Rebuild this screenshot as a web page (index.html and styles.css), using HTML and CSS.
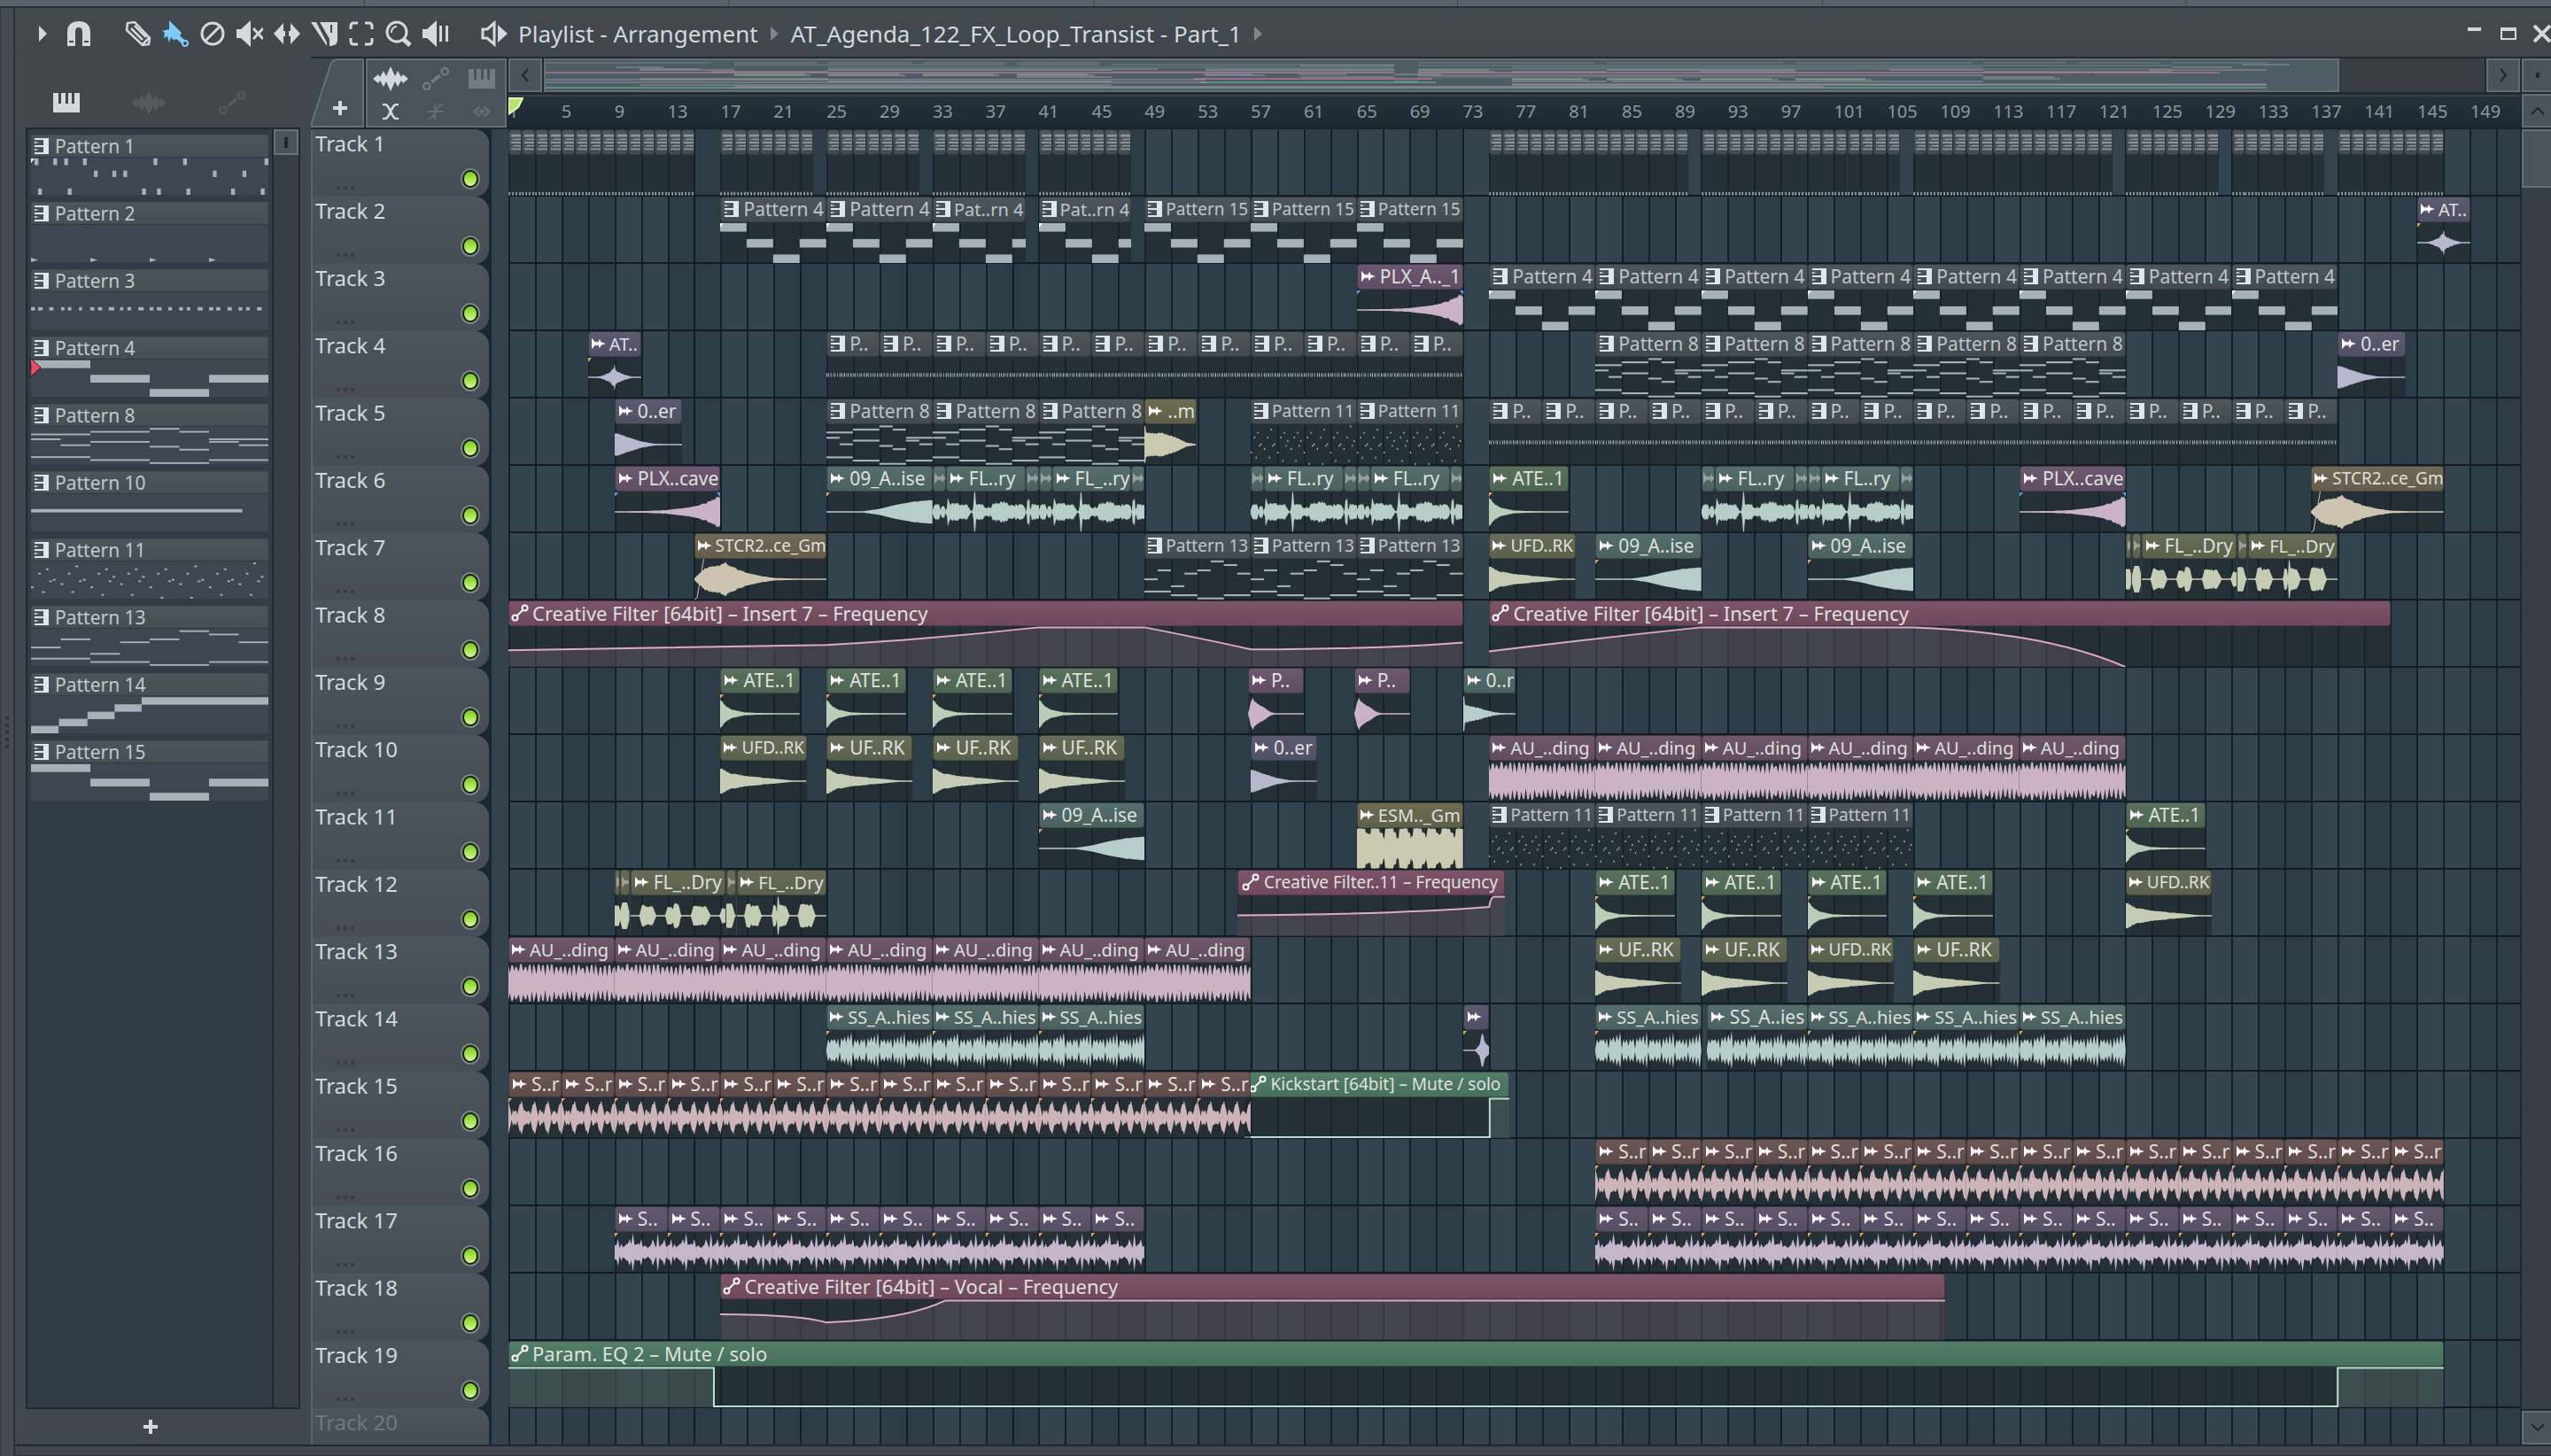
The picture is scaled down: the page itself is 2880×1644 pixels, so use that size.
FILE: index.html
```html
<!DOCTYPE html>
<html lang="en">
<head>
  <meta charset="utf-8">
  <title>Playlist - Arrangement</title>
  <link rel="stylesheet" href="styles.css">
</head>
<body>
  <!-- shared icons -->
  <svg class="defs" aria-hidden="true">
    <symbol id="i-pattern" viewBox="0 0 16 18">
      <path d="M10 0H16V18H10ZM0 0H10V2H0ZM0 4L5 5L0 6ZM0 8H10V10H0ZM0 12L5 13L0 14ZM0 16H10V18H0Z"/>
    </symbol>
    <symbol id="i-keys" viewBox="0 0 12 20">
      <path d="M0 0H12V3H0ZM4 5H12V7H0ZM0 9H12V11H0ZM4 13H12V15H0ZM0 17H12V19H0Z"/>
    </symbol>
    <symbol id="i-wave" viewBox="0 0 18 14">
      <path d="M0 0L5 5.500L6 4L8 6L10 1L12 5L18 7L12 9L10 13L8 8L6 10L5 8.500L0 14Z"/>
    </symbol>
    <symbol id="i-auto" viewBox="0 0 20 20">
      <g fill="none" stroke="currentColor" stroke-width="2"><circle cx="4.500" cy="15.500" r="3"/><circle cx="15.500" cy="4.500" r="3"/><path d="M7 13L13 7"/></g>
    </symbol>
    <symbol id="i-bigwave" viewBox="0 0 40 28">
      <path d="M0 14L6 9L8 12L12 5L15 11L20 0L25 11L28 5L32 12L34 9L40 14L34 19L32 16L28 23L25 17L20 28L15 17L12 23L8 16L6 19Z"/>
    </symbol>
    <symbol id="i-link" viewBox="0 0 32 28">
      <g fill="none" stroke="currentColor" stroke-width="2.500"><circle cx="5" cy="23" r="4"/><circle cx="27" cy="5" r="4"/><path stroke-width="4" d="M11 18L21 10"/></g>
    </symbol>
    <symbol id="i-piano" viewBox="0 0 30 22">
      <path d="M0 0H6V12H9V0H14V12H17V0H21V12H24V0H30V22H0Z"/>
    </symbol>
  </svg>

  <div class="strip"><i></i><i></i><i></i><i></i><i></i><i></i></div>
  <div class="window">
    <div class="grip"><span class="dots"><i></i><i></i><i></i><i></i><i></i></span></div>
    <div class="main">
      <header class="toolbar">
        <button class="t-arrow" aria-label="Menu"><svg viewBox="0 0 10 18"><path d="M0 0L9 9L0 18Z"/></svg></button>
        <button class="t-magnet" aria-label="Snap"><svg viewBox="0 0 28 28"><path d="M1 28V12C1 4 6 0 14 0S27 4 27 12V28H18V12C18 9 17 7 14 7S10 9 10 12V28Z"/><path d="M3 23H8M20 23H25" stroke="#40474d" stroke-width="2"/></svg></button>
        <button aria-label="Draw"><svg viewBox="0 0 30 30"><path d="M2 11L3 3L11 2L28 20L27 27L20 28L2 11Z" fill="none" stroke="currentColor" stroke-width="2.500"/><path d="M7 9L20 22M11 6L24 19M20 27L27 20" stroke="currentColor" stroke-width="2.500" fill="none"/></svg></button>
        <button class="on" aria-label="Paint"><svg viewBox="0 0 30 30"><path d="M8 0L17 9L22 14L18 21L13 22L10 19L8 25L6 18L2 20L3 14L0 12L8 10Z"/><path d="M18 19L26 26" stroke="currentColor" stroke-width="5"/><circle cx="26" cy="26" r="3" fill="#40474d" stroke="currentColor" stroke-width="2"/></svg></button>
        <button aria-label="Delete"><svg viewBox="0 0 30 30"><g fill="none" stroke="currentColor" stroke-width="3"><circle cx="15" cy="15" r="12"/><path d="M7 23L23 7"/></g></svg></button>
        <button aria-label="Mute"><svg viewBox="0 0 30 30"><path d="M0 10H5L16 0V30L5 20H0Z"/><path d="M19 9L30 21M30 9L19 21" stroke="currentColor" stroke-width="3"/></svg></button>
        <button aria-label="Slip"><svg viewBox="0 0 30 30"><path d="M0 15L11 3V12H13V18H11V27ZM30 15L19 3V12H17V18H19V27Z"/></svg></button>
        <button aria-label="Slice"><svg viewBox="0 0 30 30"><path d="M0 2H6L18 25V29ZM10 2H30V22C30 27 26 29 21 29V21Z"/><path d="M23 5V14" stroke="#40474d" stroke-width="2"/></svg></button>
        <button aria-label="Select"><svg viewBox="0 0 30 30"><path d="M11 3H6Q3 3 3 7V10M19 3H24Q27 3 27 7V10M11 27H6Q3 27 3 23V20M19 27H24Q27 27 27 23V20" fill="none" stroke="currentColor" stroke-width="3"/></svg></button>
        <button aria-label="Zoom"><svg viewBox="0 0 30 30"><circle cx="13" cy="13" r="11" fill="none" stroke="currentColor" stroke-width="3"/><path d="M7 14A6 6 0 0 1 13 7" fill="none" stroke="currentColor" stroke-width="2"/><path d="M20 21L28 28" stroke="currentColor" stroke-width="5"/></svg></button>
        <button aria-label="Playback"><svg viewBox="0 0 30 30"><path d="M0 10H5L16 0V30L5 20H0ZM19 6H22V24H19ZM26 6H29V24H26Z"/></svg></button>
        <button class="t-speaker" aria-label="Preview"><svg viewBox="0 0 30 30"><path d="M2 10H7L15 3V27L7 20H2Z" fill="none" stroke="currentColor" stroke-width="3"/><path d="M19 5L30 15L19 25Z"/></svg></button>
        <h1>Playlist - Arrangement</h1>
        <svg class="crumb" viewBox="0 0 9 16"><path d="M0 0L9 8L0 16Z"/></svg>
        <h1>AT_Agenda_122_FX_Loop_Transist - Part_1</h1>
        <svg class="crumb" viewBox="0 0 9 16"><path d="M0 0L9 8L0 16Z"/></svg>
        <span class="winbtns">
          <button aria-label="Minimize"><svg viewBox="0 0 20 20"><path d="M2 3H17V7H2Z"/></svg></button>
          <button aria-label="Maximize"><svg viewBox="0 0 20 20"><path d="M1 3H19V17H1ZM3 7V15H17V7Z" fill-rule="evenodd"/></svg></button>
          <button aria-label="Close"><svg viewBox="0 0 20 20"><path d="M1 1L19 19M19 1L1 19" stroke="currentColor" stroke-width="4"/></svg></button>
        </span>
      </header>

      <div class="content">
        <aside class="picker">
          <div class="picker-tabs">
            <button aria-label="Patterns"><svg class="piano"><use href="#i-piano"/></svg></button>
            <button class="off" aria-label="Audio clips"><svg class="bigwave"><use href="#i-bigwave"/></svg></button>
            <button class="off" aria-label="Automation"><svg class="link"><use href="#i-link"/></svg></button>
          </div>
          <div class="picker-body">
            <div class="patterns" id="patterns"></div>
            <div class="scroll">
              <button class="thumb" aria-label="Scroll patterns"></button>
            </div>
          </div>
          <button class="add" aria-label="Add pattern"><svg viewBox="0 0 16 16"><path d="M6 0H10V6H16V10H10V16H6V10H0V6H6Z"/></svg></button>
        </aside>

        <section class="playlist">
          <div class="corner">
            <div class="tab">
              <svg class="tab-shape" viewBox="0 0 60 80" preserveAspectRatio="none"><path d="M1 80V74L22 8Q24 1 30 1H59V79H1Z"/></svg>
              <button aria-label="Add track"><svg viewBox="0 0 16 16"><path d="M6 0H10V6H16V10H10V16H6V10H0V6H6Z"/></svg></button>
            </div>
            <div class="modes">
              <button aria-label="Audio"><svg class="bigwave"><use href="#i-bigwave"/></svg></button>
              <button class="dim" aria-label="Automation"><svg class="link"><use href="#i-link"/></svg></button>
              <button class="dim" aria-label="Patterns"><svg class="piano"><use href="#i-piano"/></svg></button>
              <button aria-label="Crossfade"><svg class="small" viewBox="0 0 20 20"><path d="M0 1H3C9 1 11 19 17 19H20M20 1H17C11 1 9 19 3 19H0" fill="none" stroke="currentColor" stroke-width="3"/></svg></button>
              <button class="faint" aria-label="Curve"><svg class="small" viewBox="0 0 20 20"><path d="M0 10H20M9 0V20M0 19C12 19 8 1 20 1" fill="none" stroke="currentColor" stroke-width="2"/></svg></button>
              <button class="faint" aria-label="Stretch"><svg class="small" viewBox="0 0 20 20"><path d="M7 4L1 10L7 16M13 4L19 10L13 16M6 10H14M10 6V14" fill="none" stroke="currentColor" stroke-width="3"/></svg></button>
            </div>
          </div>
          <div class="overview">
            <button class="nav" aria-label="Scroll left"><svg viewBox="0 0 10 16"><path d="M8 1L2 8L8 15"/></svg></button>
            <div class="overview-rail"><div class="mini" id="mini"></div></div>
            <button class="nav" aria-label="Scroll right"><svg viewBox="0 0 10 16"><path d="M2 1L8 8L2 15"/></svg></button>
          </div>
          <div class="ruler" id="ruler">
            <svg class="marker" viewBox="0 0 17 20"><path d="M0 1H16L11 11L0 19Z"/></svg>
          </div>
          <div class="heads" id="heads"></div>
          <div class="lanes">
            <div class="grid" id="grid"></div>
            <div class="rows" id="rows"></div>
          </div>
          <div class="vscroll">
            <button class="box" aria-label="Zoom"><i></i></button>
            <button class="box" aria-label="Scroll up"><svg viewBox="0 0 16 10"><path d="M1 9L8 2L15 9"/></svg></button>
            <div class="rail"><button class="vthumb" aria-label="Scroll tracks"></button></div>
            <button class="box" aria-label="Scroll down"><svg viewBox="0 0 16 10"><path d="M1 1L8 8L15 1"/></svg></button>
          </div>
        </section>
      </div>
      <footer class="bottom"></footer>
    </div>
  </div>
  <script src="script.js"></script>
</body>
</html>
```
FILE: styles.css
```css
* {
  box-sizing: border-box;
}

body {
  display: flex;
  flex-direction: column;
  height: 100vh;
  margin: 0;
  overflow: hidden;
  background-color: #40474d;
  color: #d3d9dc;
  font-family: "Noto Sans", "Open Sans", sans-serif;
  font-size: 21px;
}

button {
  display: flex;
  align-items: center;
  justify-content: center;
  padding: 0;
  border: 0;
  background: none;
  color: inherit;
  font: inherit;
}

svg {
  display: block;
  fill: currentColor;
}

.defs {
  display: none;
}

.strip {
  display: flex;
  flex: none;
  height: 9px;
  background-color: #59616a;
  border-bottom: 2px solid #2a3036;
  justify-content: space-evenly;
}

.strip i {
  width: 1px;
  background-color: #40474d;
}

.window {
  display: flex;
  flex: 1;
  min-height: 0;
}

.grip {
  display: flex;
  align-items: center;
  justify-content: center;
  width: 17px;
  background-color: #444b52;
  border-left: 1px solid #30363b;
  border-right: 2px solid #2b3238;
}

.dots {
  display: flex;
  flex-direction: column;
  gap: 4px;
}

.dots i {
  width: 4px;
  height: 4px;
  background-color: #2e343a;
}

.main {
  display: flex;
  flex-direction: column;
  flex: 1;
  min-width: 0;
}

/* title bar */
.toolbar {
  display: flex;
  align-items: center;
  flex: none;
  height: 55px;
  padding: 4px 0 2px 27px;
  background: linear-gradient(#434a50, #3f464c);
}

.toolbar button svg {
  width: 30px;
  height: 30px;
}

.toolbar button {
  width: 42px;
  flex: none;
}

.toolbar .t-arrow,
.toolbar .t-arrow svg {
  width: 10px;
  height: 18px;
}

.toolbar .t-magnet {
  width: 70px;
  margin-right: 11px;
}

.toolbar .t-magnet svg {
  width: 28px;
  height: 28px;
}

.toolbar .t-speaker {
  margin-left: 24px;
}

.toolbar .on {
  color: #7dcbfb;
}

.toolbar h1 {
  margin: 0 14px 0 6px;
  font-size: 26px;
  font-weight: 400;
  line-height: 32px;
  white-space: nowrap;
}

.toolbar .crumb {
  flex: none;
  width: 9px;
  height: 16px;
  margin: 0 8px 0 0;
  fill: #7f8689;
}

.winbtns {
  display: flex;
  gap: 18px;
  margin-left: auto;
}

.toolbar .winbtns button,
.toolbar .winbtns svg {
  width: 20px;
  height: 20px;
}

.content {
  display: flex;
  flex: 1;
  min-height: 0;
}

.piano {
  width: 30px;
  height: 22px;
}

.bigwave {
  width: 40px;
  height: 28px;
}

.link {
  width: 32px;
  height: 26px;
}

.small {
  width: 20px;
  height: 18px;
}

/* pattern picker on the left */
.picker {
  display: flex;
  flex-direction: column;
  flex: none;
  width: 334px;
  padding: 0 12px;
}

.picker-tabs {
  display: flex;
  align-items: center;
  gap: 58px;
  height: 80px;
  padding: 24px 0 0 31px;
}

.picker-tabs .off {
  color: #535b61;
}

.picker-body {
  display: flex;
  flex: 1;
  min-height: 0;
  border: 2px solid #20292f;
}

.patterns {
  flex: 1;
  display: flex;
  flex-direction: column;
  gap: 8px;
  padding: 6px 4px;
  background-color: #323c44;
}

.pattern {
  display: block;
  position: relative;
  width: 100%;
  height: 68px;
  text-align: left;
}

.pattern-head {
  display: flex;
  align-items: center;
  gap: 7px;
  height: 25px;
  padding: 0 3px;
  color: #bfc9ce;
  line-height: 22px;
  background: linear-gradient(#4c555a, #474f55);
  border: 1px solid #434b51;
}

.pattern-head svg {
  width: 16px;
  height: 18px;
  color: #dce8ee;
}

.pattern-view {
  display: block;
  width: 100%;
  height: 43px;
  background-color: #3e474f;
  border-top: 1px solid #343c43;
}

.notes {
  width: 100%;
  height: 100%;
  fill: #a8b1b8;
}

/* red triangle in front of the selected pattern */
.selected {
  position: absolute;
  left: -3px;
  top: 23px;
  width: 16px;
  height: 24px;
  fill: #ee4a66;
  stroke: #1a2026;
  stroke-width: 1px;
}

.corner-mark {
  position: absolute;
  left: 0;
  top: 27px;
  border-top: 5px solid #ffffff;
  border-right: 4px solid transparent;
}

.scroll {
  width: 30px;
  border-left: 2px solid #20292f;
  background: repeating-linear-gradient(45deg, #383f46, #383f46 2px, #343b41 2px, #343b41 4px);
}

.thumb {
  width: 100%;
  height: 29px;
  background-color: #4c545b;
  border: 2px solid #697178;
}

.thumb::after {
  content: "";
  width: 4px;
  height: 12px;
  background-color: #1f262c;
}

.add {
  height: 40px;
  padding-right: 28px;
}

.add svg,
.tab button svg {
  width: 16px;
  height: 16px;
}

/* playlist */
.playlist {
  flex: 1;
  min-width: 0;
  display: grid;
  grid-template-columns: 223px 1fr 35px;
  grid-template-rows: 43px 39px 1fr;
  background-color: #1d282f;
}

.corner {
  grid-row: 1 / 3;
  display: flex;
  gap: 2px;
  padding: 2px 2px 2px 0;
  background-color: #1f282e;
}

.tab {
  position: relative;
  display: flex;
  justify-content: center;
  width: 60px;
  padding: 44px 0 0 6px;
  background-color: #40474d;
}

.tab button {
  position: relative;
  height: 24px;
}

.tab-shape {
  position: absolute;
  left: 0;
  top: 0;
  width: 100%;
  height: 100%;
  fill: #4b535a;
  stroke: #687077;
  stroke-width: 2px;
}

.modes {
  flex: 1;
  display: grid;
  grid-template-columns: repeat(3, 1fr);
  align-items: center;
  background-color: #4b535a;
  border: 2px solid #656d74;
}

.dim {
  color: #747c82;
}

.faint {
  color: #656d73;
}

.overview {
  display: flex;
  align-items: stretch;
  gap: 2px;
  padding: 2px 0 3px 0;
  background-color: #23292f;
}

.nav {
  width: 38px;
  flex: none;
  background-color: #4b535a;
  border: 2px solid #656d74;
}

.nav svg {
  width: 10px;
  height: 16px;
  fill: none;
  stroke: #1f272d;
  stroke-width: 2px;
}

.overview-rail {
  flex: 1;
  background-color: #363d43;
}

.mini {
  position: relative;
  width: 92.5%;
  height: 100%;
  background-color: #4e5d64;
  border: 2px solid #646f75;
}

.mini i {
  position: absolute;
  height: 2px;
  opacity: 0.7;
}

.ruler {
  position: relative;
  overflow: hidden;
  background: linear-gradient(#25323a, #1d2930);
  border-bottom: 2px solid #1a242a;
  border-top: 2px solid #33434b;
}

.ruler span {
  position: absolute;
  top: 5px;
  color: #8c989f;
  font-size: 20px;
  line-height: 24px;
}

.ruler .marker {
  position: absolute;
  left: 0;
  top: 1px;
  width: 17px;
  height: 20px;
  fill: #b5e07a;
  stroke: #e9ffb4;
  stroke-width: 2px;
}

.heads {
  overflow: hidden;
  min-height: 0;
  border-left: 2px solid #5a636a;
  background: linear-gradient(90deg, #1b272e 202px, #33424b 202px);
}

.head {
  position: relative;
  width: 199px;
  height: 76px;
  padding: 0 3px;
  background: linear-gradient(#4c555b, #464d54);
  border-radius: 0 16px 16px 0;
  font-size: 24px;
  line-height: 31px;
}

.head.idle {
  height: 41px;
  color: #70787e;
  border-bottom-right-radius: 0;
}

.head .more {
  position: absolute;
  left: 27px;
  bottom: 8px;
  display: flex;
  gap: 4px;
}

.head .more i {
  width: 4px;
  height: 4px;
  background-color: #363e44;
}

.head input {
  appearance: none;
  position: absolute;
  right: 12px;
  top: 46px;
  width: 18px;
  height: 20px;
  margin: 0;
  border: 2px solid #16240f;
  border-radius: 50%;
  background: linear-gradient(#7fc52a, #a4e648 50%, #d6f5a2);
  box-shadow: 0 0 0 2px #7d8781;
}

.lanes {
  position: relative;
  overflow: hidden;
  min-height: 0;
  background-color: #2d3d48;
}

.grid {
  position: absolute;
  inset: 0;
  display: flex;
}

.grid i {
  flex: none;
  border-left: 2px solid #11212b;
}

.grid i:nth-child(4n+1),
.grid i:nth-child(4n+2) {
  background-color: #33444f;
}

.rows {
  position: relative;
}

.row {
  position: relative;
  height: 76px;
  border-bottom: 2px solid #0f1c24;
}

.clip {
  position: absolute;
  top: 0;
  bottom: -1px;
  overflow: hidden;
  background-color: rgba(30, 36, 40, 0.6);
}

.clip-head {
  display: flex;
  align-items: center;
  gap: 5px;
  height: 29px;
  padding: 0 0 1px 4px;
  overflow: hidden;
  line-height: 25px;
  white-space: nowrap;
  border: 1px solid rgba(30, 36, 40, 0.5);
  border-radius: 4px;
  background: linear-gradient(rgba(255, 255, 255, 0.04), rgba(0, 0, 0, 0.06)) var(--head);
  color: #dfe0df;
}

.clip-head svg {
  flex: none;
  width: 16px;
  height: 14px;
  color: #fdf6fa;
}

.clip-pattern .clip-head {
  color: #bdc6cb;
}

.clip-pattern .clip-head svg {
  height: 18px;
  color: #dce8ee;
}

.clip-auto .clip-head {
  gap: 3px;
  padding-left: 1px;
  font-size: 22px;
}

.clip-auto .clip-head svg {
  width: 22px;
  height: 20px;
}

/* smaller type for labels that do not fit their clip */
.clip-head.tight {
  gap: 4px;
  padding-left: 3px;
  font-size: 20px;
}

.clip-head.tighter {
  font-size: 19px;
}

.clip-head.tightest {
  font-size: 18px;
}

.clip-short .clip-head {
  padding-left: 1px;
}

.clip-short .clip-head svg {
  opacity: 0.4;
}

.clip-step .clip-head {
  padding: 0 1px 0 2px;
}

.clip-step .clip-head svg {
  width: 11px;
  height: 20px;
  color: #8b959a;
}

.clip-view {
  display: block;
  width: 100%;
  height: 46px;
}

.clip-pattern .clip-view {
  fill: #a8b1b8;
}

.clip-audio .clip-view {
  fill: var(--wave);
  stroke: var(--wave);
  stroke-width: 1px;
}

.clip-auto .clip-view {
  fill: none;
  stroke: var(--wave);
  stroke-width: 2px;
}

.clip-auto .area {
  fill: var(--wave);
  fill-opacity: 0.16;
  stroke: none;
}

/* loop and fade marks in the corners of a clip */
.mark {
  position: absolute;
  left: 0;
  top: 30px;
  border-top: 5px solid #e5a35c;
  border-right: 4px solid transparent;
}

.mark-white {
  border-top-color: #ffffff;
}

.mark-blue {
  border-top-color: #5f9ddb;
}

.mark-end {
  left: auto;
  right: 0;
  border-right: 0;
  border-left: 4px solid transparent;
}

/* right scroll bar */
.vscroll {
  grid-column: 3;
  grid-row: 1 / 4;
  display: flex;
  flex-direction: column;
  gap: 2px;
  padding: 2px 0 0 2px;
}

.box {
  height: 38px;
  flex: none;
  background-color: #4b535a;
  border: 2px solid #656d74;
  border-right: 0;
}

.box i {
  width: 4px;
  height: 6px;
  background-color: #1f272d;
}

.box svg {
  width: 16px;
  height: 10px;
  fill: none;
  stroke: #1f272d;
  stroke-width: 2px;
}

.rail {
  flex: 1;
  background: repeating-linear-gradient(45deg, #383f46, #383f46 2px, #343b41 2px, #343b41 4px);
}

.vthumb {
  width: 100%;
  height: 66px;
  background-color: #4b535a;
  border: 2px solid #656d74;
  border-right: 0;
}

.bottom {
  flex: none;
  height: 13px;
  border-top: 2px solid #20292f;
  border-bottom: 1px solid #2a3036;
}
```
FILE: script.js
```js
const BARS = 151.75; // bars that fit in the view
const TRACKS = 20;

// header colour, waveform colour
const colors = {
  pattern: ['#474f55', '#a8b1b8'],
  lavender: ['#55546b', '#b7b8ce'],
  pink: ['#66526a', '#cab2c9'],
  mauve: ['#685163', '#cbb3c4'],
  teal: ['#4f6865', '#b6cdc9'],
  green: ['#526b56', '#b8ceb6'],
  olive: ['#61674f', '#c5ccb3'],
  moss: ['#65664b', '#c9cab0'],
  tan: ['#6b634f', '#ccc4b0'],
  plum: ['#66504f', '#ccb4b8'],
  purple: ['#5c526a', '#c5b5cd'],
  rose: ['#774d62', '#dfa9c4'],
  mint: ['#4c7863', '#b3e6cc']
};

function noise(n) {
  const x = Math.sin(n * 127.1 + 11.7) * 43758.5453;
  return x - Math.floor(x);
}

// straight lines between [x, value] points
function lerp(points, t) {
  for (let i = 1; i < points.length; i++) {
    const [x0, y0] = points[i - 1];
    const [x1, y1] = points[i];
    if (t <= x1) return y0 + (y1 - y0) * (t - x0) / (x1 - x0 || 1);
  }
  return points[points.length - 1][1];
}

function env(points, rough) {
  return (t, i) => Math.max(0.02, lerp(points, t) * (1 - rough * noise(i)));
}

// bumps given as [centre, half width, height]
function lobes(list, t, base = 0.02) {
  let a = base;
  for (const [c, w, h] of list) a = Math.max(a, h * Math.min(1, 1.8 * (1 - Math.abs(t - c) / w)));
  return a;
}

const waves = {
  burst: env([[0, .02], [.15, .02], [.3, .12], [.42, .3], [.5, .68], [.51, .42], [.6, .25], [.7, .12], [.85, .02], [1, .02]], .3),
  tail: env([[0, .6], [.1, .52], [.25, .32], [.4, .16], [.6, .04], [.8, .02], [1, .02]], .12),
  swell: env([[0, .02], [.3, .05], [.5, .1], [.7, .24], [.85, .44], [.96, .74], [.98, .85], [1, .7]], .15),
  rise: env([[0, .02], [.33, .02], [.5, .15], [.65, .35], [.8, .5], [1, .6]], .05),
  impact: env([[0, .05], [.03, .25], [.08, .6], [.2, .75], [.23, .9], [.26, .7], [.3, .6], [.4, .32], [.5, .17], [.6, .07], [.75, .03], [1, .02]], .15),
  hit: env([[0, .78], [.06, .45], [.15, .22], [.3, .08], [.5, .04], [.8, .02], [1, .02]], .12),
  clap: env([[0, .7], [.12, .42], [.3, .27], [.5, .18], [.7, .1], [.85, .03], [1, .02]], .15),
  crash: env([[0, 1], [.02, 1], [.03, .62], [.35, .6], [.6, .38], [.8, .12], [1, .02]], .12),
  perc: env([[0, .02], [.07, .85], [.15, .6], [.25, .4], [.4, .1], [.5, .02], [1, .02]], .15),
  snap: env([[0, 1], [.02, 1], [.03, .48], [.2, .4], [.4, .22], [.6, .08], [.8, .02], [1, .02]], .2),
  reverse: env([[0, .02], [.45, .03], [.62, .3], [.72, 1], [.82, .4], [.9, .3], [1, .2]], .15),
  noise: (t, i) => i % 3 === 1 ? .3 + .3 * noise(i) : .7 + .24 * noise(i >> 1),
  full: (t, i) => {
    const p = (t * 7.5) % 1;
    return p > .8 ? .45 + noise(i) * .3 : 1 - noise(i) * .05 - (p > .6 ? .2 : 0);
  },
  hats: (t, i) => {
    const p = (t * 4) % 1;
    if (i % 8 === 0) return .08;
    return i % 2 ? .55 + .4 * Math.pow(p, 3) : .2 + .25 * noise(i);
  },
  kick: (t, i) => {
    const p = (t * 4 + .05) % 1;
    const d = Math.min(p, 1 - p);
    const side = Math.abs(p - .5) < .2 ? .4 : .08;
    return Math.max(side * (.6 + .4 * noise(i)), (.98 - d * 2.9) * (i % 4 === 3 ? .75 : 1));
  },
  shaker: (t, i) => {
    if (i % 15 === 11) return .95;
    if (i % 7 === 2) return .65;
    return .18 + .25 * noise(i);
  },
  // one bar of the loop, then six, then one again
  loopA: (t, i) => lobes([[.3, .35, .42], [.78, .22, .3]], t) * (.75 + .25 * noise(i)),
  loopB: (t, i) => lobes([[.03, .02, .8], [.1, .12, .45], [.22, .1, .42], [.36, .02, 1.1], [.42, .1, .45],
    [.52, .06, .25], [.62, .07, .5], [.72, .1, .6], [.82, .06, .4], [.92, .1, .42]], t) * (.7 + .3 * noise(i)),
  loopC: (t, i) => lobes([[.2, .15, .7], [.6, .3, .4], [.9, .25, .35]], t) * (.75 + .25 * noise(i)),
  dryA: (t, i) => lobes([[.3, 1, .5]], t),
  dryB: (t, i) => lobes([[.5, .6, .65]], t),
  dryC: (t, i) => lobes([[.14, .05, .55], [.2, .07, .5], [.41, .05, .5], [.48, .05, .65], [.68, .05, .55],
    [.75, .09, .5], [.98, .05, .4]], t) * (.8 + .2 * noise(i)),
  dryD: (t, i) => lobes([[.3, .6, .6]], t),
  dryE: (t, i) => lobes([[.13, .05, .6], [.2, .08, .55], [.42, .03, .6], [.46, .015, 1.1], [.51, .08, .55],
    [.73, .05, .65], [.8, .08, .6]], t) * (.8 + .2 * noise(i))
};

// notes of each pattern as [x, y, width, height] in percent
function dashes(y, h, list) {
  return list.map(([x, w]) => [x, y, w, h]);
}

const chord4 = [[0, 2, 25, 21], [25, 41, 25, 21], [50, 79, 25, 21], [75, 41, 25, 21]];
const patternNotes = {
  1: [...dashes(2, 18, [[1.5, 1.6], [9.4, 1.6], [14, 1.6], [21.9, 1.6], [51.6, 1.6], [64.1, 1.6], [98.4, 1.6]]),
    ...dashes(35, 17, [[26.5, 1.6], [34.3, 1.6], [38.9, 1.6], [76.6, 1.6], [89.1, 1.6]]),
    ...dashes(83, 17, [[3, 1.6], [15.5, 1.6], [46.8, 1.6], [53.1, 1.6], [65.5, 1.6], [84.3, 1.6], [96.8, 1.6]])],
  3: dashes(40, 9, [[0, 1.7], [3, 1.9], [7.7, 1.8], [12.7, 1.4], [15.5, 1.5], [20.2, 1.3], [24.9, 1.8], [28.2, 1.8],
    [32.7, 2.4], [37.5, 1.4], [40.6, 1.6], [45.2, 2.3], [50, 1.6], [53, 2], [57.8, 1.6], [62.4, 1.6], [65.6, 1.5],
    [70.2, 2.1], [75, 1.8], [78, 1.8], [82.8, 1.8], [87.4, 1.6], [90.6, 1.6], [95.2, 2]]),
  4: chord4,
  8: [[0, 18, 25], [25, 11, 25], [50, 3, 12.5], [62.5, 11, 12.5], [75, 31, 25], [0, 31, 12.5], [12.5, 47, 12.5],
    [25, 38, 25], [50, 51, 12.5], [62.5, 59, 12.5], [75, 38, 12.5], [87.5, 47, 12.5], [0, 79, 25], [25, 87, 25],
    [50, 95, 25], [75, 87, 25]].map(n => [...n, 4.5]),
  10: [[0, 40, 89, 9]],
  11: [[99, 434], [121, 387], [133, 450], [145, 372], [155, 413], [166, 408], [190, 423], [212, 387], [223, 450],
    [235, 362], [246, 413], [258, 408], [281, 434], [303, 387], [315, 460], [326, 372], [337, 413], [349, 398],
    [372, 423], [394, 387], [405, 460], [417, 372], [428, 413], [439, 398], [462, 434], [485, 387], [496, 470],
    [508, 372], [519, 413], [530, 408], [553, 423], [575, 387], [587, 470], [599, 362], [610, 413], [621, 408],
    [644, 434], [666, 387], [678, 460], [690, 372], [701, 413], [712, 408], [735, 423], [757, 387], [769, 460],
    [780, 352], [792, 413], [803, 398]].map(([x, y]) => [(x - 99) / 7.27, (y - 348) / 1.28, 1.1, 4.5]),
  13: [[0, 48, 12.5], [12.5, 26, 12.5], [25, 65, 12.5], [37.5, 34, 12.5], [50, 26, 12.5], [62.5, 4, 12.5],
    [75, 13, 12.5], [87.5, 34, 12.5], [0, 78, 25], [25, 87, 25], [50, 95, 25], [75, 87, 25]].map(n => [...n, 4.5]),
  14: [[0, 80, 11.6, 20], [11.8, 61, 12, 20], [23.8, 42, 11.4, 20], [35.2, 22, 11.4, 20], [46.6, 3, 53.4, 20]],
  15: chord4
};

function notesSvg(id, cls) {
  let shapes = '';
  if (id === 2) {
    shapes = [0, 25, 50, 75].map(x => `<path d="M${x} 88L${x + 3} 94L${x} 100Z"/>`).join('');
  } else if (id === 'step') {
    shapes = [3, 30, 55, 82].map(x => `<rect x="${x}" y="91" width="10" height="8"/>`).join('');
  } else {
    shapes = patternNotes[id].map(n => `<rect x="${n[0]}" y="${n[1]}" width="${n[2]}" height="${n[3]}"/>`).join('');
  }
  return `<svg class="${cls}" viewBox="0 0 100 100" preserveAspectRatio="none">${shapes}</svg>`;
}

// points per bar for the dense waveforms
const detail = { noise: 9, hats: 8, kick: 12, shaker: 8 };

function waveSvg(name, bars) {
  const n = Math.max(12, Math.round(bars * (detail[name] || 15)));
  const up = [];
  const down = [];
  for (let i = 0; i <= n; i++) {
    const a = Math.min(1, waves[name](i / n, i)) * 23;
    up.push(`${i} ${(23 - a).toFixed(1)}`);
    down.unshift(`${i} ${(23 + a).toFixed(1)}`);
  }
  const fade = name === 'impact' ?
    `<path d="M0 46L${n * .02} 44L${n * .07} 0" fill="none" vector-effect="non-scaling-stroke"/>` : '';
  return `<svg class="clip-view" viewBox="0 0 ${n} 46" preserveAspectRatio="none">` +
    `<path d="M${up.join('L')}L${down.join('L')}Z" stroke-width="0"/><path d="M0 23H${n}" vector-effect="non-scaling-stroke"/>${fade}</svg>`;
}

function autoSvg(bars, line) {
  return `<svg class="clip-view" viewBox="0 0 ${bars} 100" preserveAspectRatio="none">` +
    `<path class="area" d="${line}V100H0Z"/><path d="${line}" vector-effect="non-scaling-stroke"/></svg>`;
}

const clips = [];

function pat(track, start, len, id, label) {
  clips.push({ track, start, len, kind: 'pattern', id, label, color: 'pattern' });
}

function audio(track, start, len, label, color, wave, mark) {
  clips.push({ track, start, len, kind: 'audio', label, color, wave, mark });
}

function auto(track, start, len, label, color, line) {
  clips.push({ track, start, len, kind: 'auto', label, color, line });
}

function range(from, to, step, fn) {
  for (let b = from; b < to; b += step) fn(b);
}

function loopRow(track, start, labels) {
  labels.forEach((label, k) => {
    const b = start + k * 8;
    audio(track, b, 1, '', 'teal', 'loopA');
    audio(track, b + 1, 6, label, 'teal', 'loopB');
    audio(track, b + 7, 1, '', 'teal', 'loopC');
  });
}

function dryRow(track, b) {
  audio(track, b, .4, '', 'olive', 'dryA');
  audio(track, b + .45, .7, '', 'olive', 'dryB');
  audio(track, b + 1.2, 7.2, 'FL_..Dry', 'olive', 'dryC');
  audio(track, b + 8.45, .75, '', 'olive', 'dryD');
  audio(track, b + 9.25, 6.75, 'FL_..Dry', 'olive', 'dryE');
}

[[1, 15], [17, 24], [25, 32], [33, 40], [41, 48], [75, 90], [91, 106], [107, 122], [123, 130], [131, 138], [139, 147]]
  .forEach(([a, z]) => range(a, z, 1, b => pat(1, b, 1, 'step', '')));

pat(2, 17, 8, 4, 'Pattern 4');
pat(2, 25, 8, 4, 'Pattern 4');
pat(2, 33, 7, 4, 'Pat..rn 4');
pat(2, 41, 7, 4, 'Pat..rn 4');
range(49, 73, 8, b => pat(2, b, 8, 15, 'Pattern 15'));
audio(2, 145, 4, 'AT..', 'lavender', 'burst', 'orange');

audio(3, 65, 8, 'PLX_A.._1', 'pink', 'swell', 'blue');
range(75, 139, 8, b => pat(3, b, 8, 4, 'Pattern 4'));

audio(4, 7, 4, 'AT..', 'lavender', 'burst', 'orange');
range(25, 73, 4, b => pat(4, b, 4, 3, 'P..'));
range(83, 123, 8, b => pat(4, b, 8, 8, 'Pattern 8'));
audio(4, 139, 5.1, '0..er', 'lavender', 'tail');

audio(5, 9, 5.1, '0..er', 'lavender', 'tail');
range(25, 49, 8, b => pat(5, b, 8, 8, 'Pattern 8'));
audio(5, 49, 3.9, '..m', 'moss', 'crash');
range(57, 73, 8, b => pat(5, b, 8, 11, 'Pattern 11'));
range(75, 139, 4, b => pat(5, b, 4, 3, 'P..'));

audio(6, 9, 8, 'PLX..cave', 'pink', 'swell', 'blue');
audio(6, 25, 8, '09_A..ise', 'teal', 'rise', 'orange');
loopRow(6, 33, ['FL..ry', 'FL_..ry']);
loopRow(6, 57, ['FL..ry', 'FL..ry']);
audio(6, 75, 6, 'ATE..1', 'green', 'hit', 'orange');
loopRow(6, 91, ['FL..ry', 'FL..ry']);
audio(6, 115, 8, 'PLX..cave', 'pink', 'swell', 'blue');
audio(6, 137, 10, 'STCR2..ce_Gm', 'tan', 'impact');

audio(7, 15, 10, 'STCR2..ce_Gm', 'tan', 'impact');
range(49, 73, 8, b => pat(7, b, 8, 13, 'Pattern 13'));
audio(7, 75, 6.5, 'UFD..RK', 'olive', 'clap');
audio(7, 83, 8, '09_A..ise', 'teal', 'rise', 'orange');
audio(7, 99, 8, '09_A..ise', 'teal', 'rise', 'orange');
dryRow(7, 123);

auto(8, 1, 72, 'Creative Filter [64bit] – Insert 7 – Frequency', 'rose', 'M0 59L24 46Q32 32 40 3H48Q53 35 56 57Q66 56 72 40');
auto(8, 75, 68, 'Creative Filter [64bit] – Insert 7 – Frequency', 'rose', 'M0 62Q8 30 16 3H32Q42 15 48 100');

range(17, 49, 8, b => audio(9, b, 6, 'ATE..1', 'green', 'hit', 'orange'));
audio(9, 56.8, 4.2, 'P..', 'pink', 'perc');
audio(9, 64.8, 4.2, 'P..', 'pink', 'perc');
audio(9, 73, 4, '0..r', 'teal', 'snap');

audio(10, 17, 6.5, 'UFD..RK', 'olive', 'clap');
range(25, 49, 8, b => audio(10, b, 6.5, 'UF..RK', 'olive', 'clap'));
audio(10, 57, 5, '0..er', 'lavender', 'tail');
range(75, 123, 8, b => audio(10, b, 8, 'AU_..ding', 'mauve', 'noise'));

audio(11, 41, 8, '09_A..ise', 'teal', 'rise', 'orange');
audio(11, 65, 8, 'ESM.._Gm', 'moss', 'full');
range(75, 107, 8, b => pat(11, b, 8, 11, 'Pattern 11'));
audio(11, 123, 6, 'ATE..1', 'green', 'hit', 'orange');

dryRow(12, 9);
auto(12, 56, 20.2, 'Creative Filter..11 – Frequency', 'rose', 'M0 49Q12 46 19 28Q19.100 3 19.400 3H20.200');
range(83, 115, 8, b => audio(12, b, 6, 'ATE..1', 'green', 'hit', 'orange'));
audio(12, 123, 6.5, 'UFD..RK', 'olive', 'clap');

range(1, 57, 8, b => audio(13, b, 8, 'AU_..ding', 'mauve', 'noise'));
range(83, 115, 8, b => audio(13, b, 6.5, b === 99 ? 'UFD..RK' : 'UF..RK', 'olive', 'clap'));

range(25, 49, 8, b => audio(14, b, 8, 'SS_A..hies', 'teal', 'hats', 'orange'));
audio(14, 73, 2, '', 'lavender', 'reverse', 'orange');
audio(14, 83, 8, 'SS_A..hies', 'teal', 'hats', 'orange');
audio(14, 91.4, 7.6, 'SS_A..ies', 'teal', 'hats');
range(99, 123, 8, b => audio(14, b, 8, 'SS_A..hies', 'teal', 'hats', 'orange'));

auto(15, 56.5, 20, 'Kickstart [64bit] – Mute / solo', 'mint', 'M0 98H18.500V3H20');
range(1, 57, 4, b => audio(15, b, 4, 'S..r', 'plum', 'kick', 'orange'));
range(83, 147, 4, b => audio(16, b, 4, 'S..r', 'plum', 'kick', 'orange'));
range(9, 49, 4, b => audio(17, b, 4, 'S..', 'purple', 'shaker', 'orange'));
range(83, 147, 4, b => audio(17, b, 4, 'S..', 'purple', 'shaker', 'orange'));

auto(18, 17, 92.4, 'Creative Filter [64bit] – Vocal – Frequency', 'rose', 'M0 37Q6 38 8 57Q14 50 17 3H92.400');
auto(19, 1, 146, 'Param. EQ 2 – Mute / solo', 'mint', 'M0 3H15.500V98H138V3H146');

// pattern picker
const picker = document.getElementById('patterns');
[1, 2, 3, 4, 8, 10, 11, 13, 14, 15].forEach(id => {
  const item = document.createElement('button');
  item.className = 'pattern';
  item.innerHTML = `<span class="pattern-head"><svg><use href="#i-pattern"/></svg>Pattern ${id}</span>` +
    `<span class="pattern-view">${notesSvg(id, 'notes')}</span>` +
    (id === 1 ? '<span class="corner-mark"></span>' : '') +
    (id === 4 ? '<svg class="selected" viewBox="0 0 16 24"><path d="M2 1L14 12L2 23Q4 12 2 1Z"/></svg>' : '');
  picker.append(item);
});

// ruler and grid
const ruler = document.getElementById('ruler');
for (let b = 1; b < BARS; b += 4) {
  const label = document.createElement('span');
  label.textContent = b;
  label.style.left = (b - 1) / BARS * 100 + '%';
  ruler.prepend(label);
}

const grid = document.getElementById('grid');
for (let b = 0; b < BARS; b += 2) {
  const col = document.createElement('i');
  col.style.width = 2 / BARS * 100 + '%';
  grid.append(col);
}

// tracks
const heads = document.getElementById('heads');
const rows = [];
for (let t = 1; t <= TRACKS; t++) {
  const head = document.createElement('div');
  head.className = t < TRACKS ? 'head' : 'head idle';
  head.innerHTML = t < TRACKS ?
    `<label for="mute${t}">Track ${t}</label><span class="more"><i></i><i></i><i></i></span><input type="checkbox" id="mute${t}" checked>` :
    `<span>Track ${t}</span>`;
  heads.append(head);

  const row = document.createElement('div');
  row.className = 'row';
  document.getElementById('rows').append(row);
  rows.push(row);
}

const mini = document.getElementById('mini');
for (const c of clips) {
  const [head, wave] = colors[c.color];
  const el = document.createElement('div');
  const small = c.id === 'step' ? ' clip-step' : c.kind === 'audio' && c.len <= 1 ? ' clip-short' : '';
  el.className = `clip clip-${c.kind}${small}`;
  el.style.left = (c.start - 1) / BARS * 100 + '%';
  el.style.width = c.len / BARS * 100 + '%';
  el.style.setProperty('--head', head);
  el.style.setProperty('--wave', wave);

  let icon = { pattern: 'i-pattern', audio: 'i-wave', auto: 'i-auto' }[c.kind];
  let view;
  if (c.kind === 'pattern') {
    view = notesSvg(c.id, 'clip-view');
    if (c.id === 4) c.mark = 'white';
    if (c.id === 'step') icon = 'i-keys';
    // cut short clips instead of squeezing their notes
    if (c.id === 4 && c.len === 7) view = view.replace('0 0 100 100', '0 0 87.5 100');
  } else if (c.kind === 'audio') {
    view = waveSvg(c.wave, c.len);
  } else {
    view = autoSvg(c.len, c.line);
  }
  const name = c.label ? `<span>${c.label}</span>` : '';
  el.innerHTML = `<div class="clip-head"><svg><use href="#${icon}"/></svg>${name}</div>${view}` +
    (c.mark ? `<i class="mark mark-${c.mark}"></i>` : '') +
    (c.mark === 'blue' ? '<i class="mark mark-blue mark-end"></i>' : '');
  rows[c.track - 1].append(el);

  if (c.label) {
    const bar = el.firstChild;
    for (const cls of ['tight', 'tighter', 'tightest']) {
      if (bar.scrollWidth > bar.clientWidth) bar.classList.add(cls);
    }
  }

  const dash = document.createElement('i');
  dash.style.left = (c.start - 1) / 152 * 100 + '%';
  dash.style.width = c.len / 152 * 100 + '%';
  dash.style.top = (c.track + .5) * 4.6 + '%';
  dash.style.backgroundColor = { rose: '#b5759a', mint: '#5fa585', pattern: '#66757b' }[c.color] || wave;
  if (c.kind === 'audio') dash.style.opacity = 0.3;
  mini.append(dash);
}
```
